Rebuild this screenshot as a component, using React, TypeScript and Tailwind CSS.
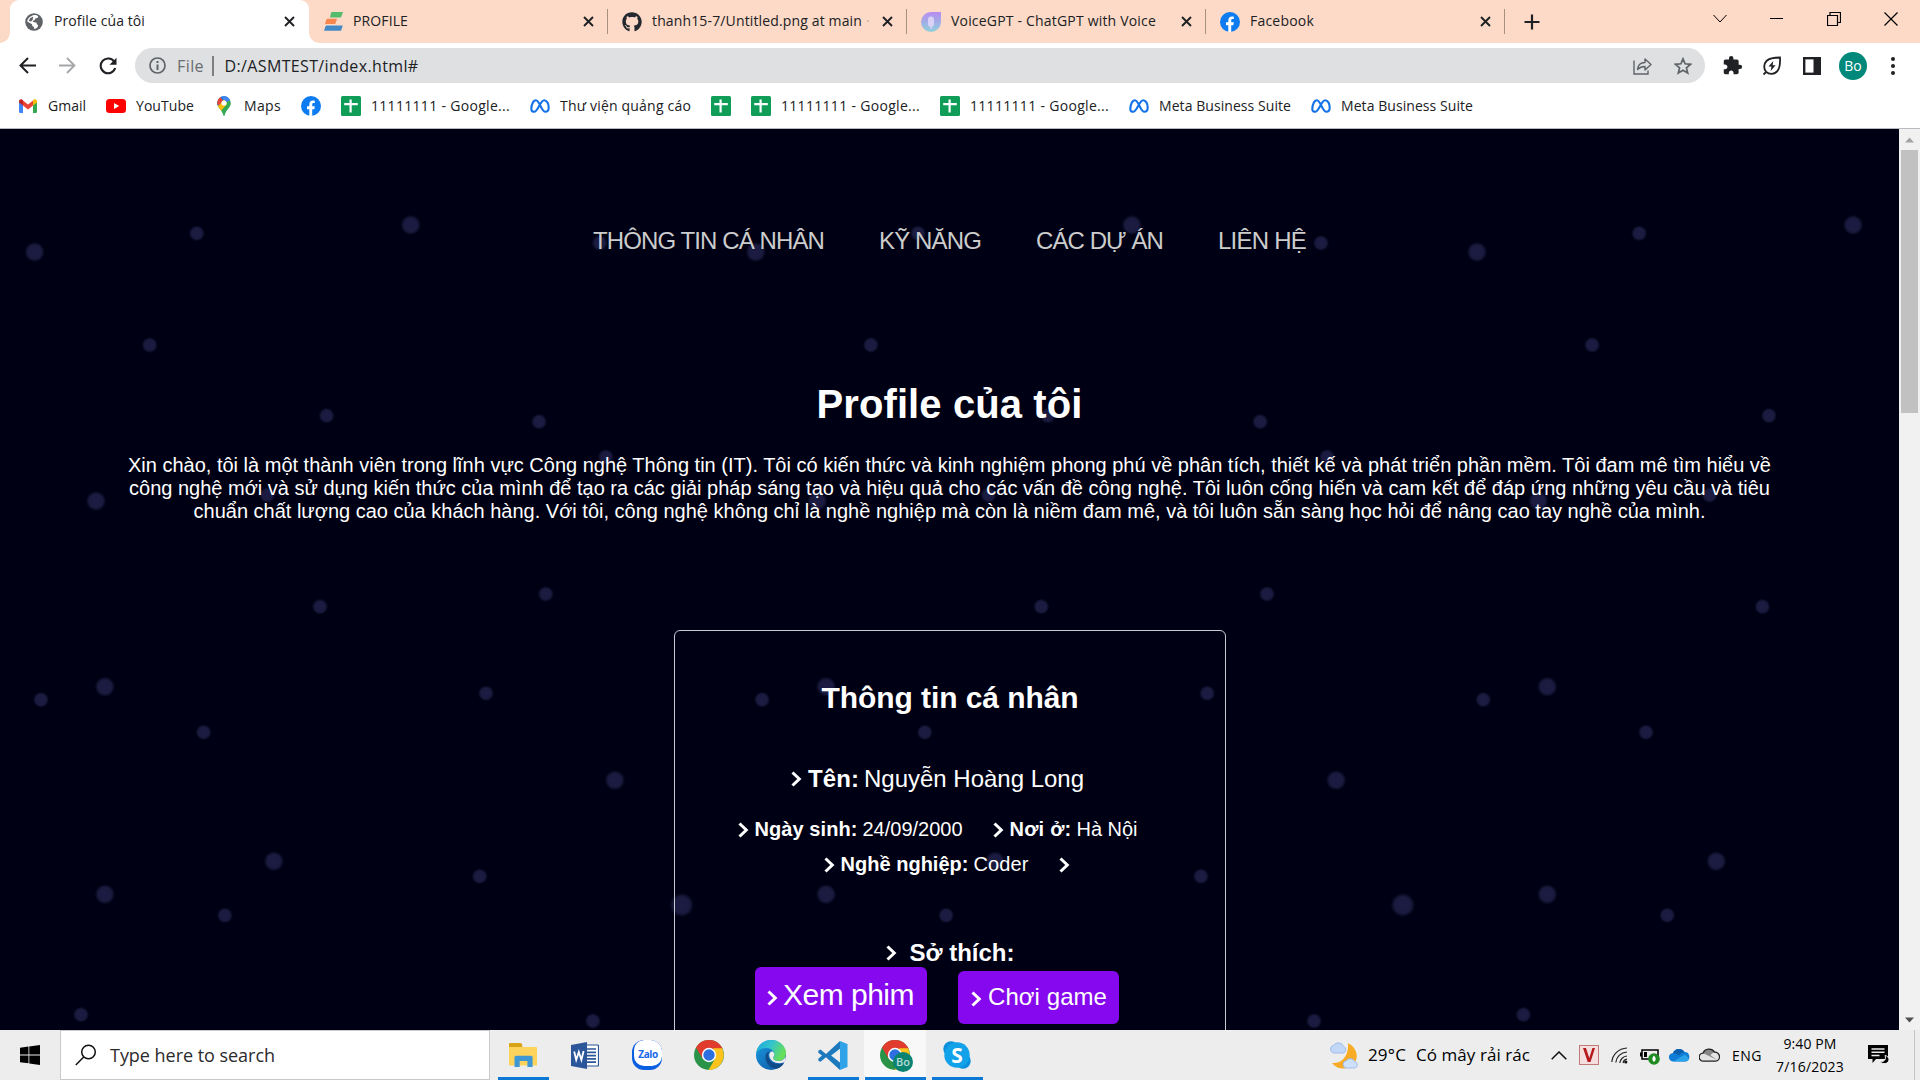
import { useLayoutEffect, useRef, type ReactNode } from "react";
import { FaGithub } from "react-icons/fa";
import { MdExtension } from "react-icons/md";

/* Text whose tracking is adjusted so that it spans exactly `w` pixels. */
function Fit({ w, children, className = "" }: { w: number; children: string; className?: string }) {
  const ref = useRef<HTMLSpanElement>(null);
  useLayoutEffect(() => {
    const el = ref.current;
    if (!el) return;
    el.style.letterSpacing = "0px";
    const natural = el.getBoundingClientRect().width;
    el.style.letterSpacing = `${(w - natural) / children.length}px`;
  }, [w, children]);
  return (
    <span ref={ref} className={`inline-block shrink-0 whitespace-pre ${className}`}>
      {children}
    </span>
  );
}

function Facebook({ size = 20 }: { size?: number }) {
  return (
    <svg width={size} height={size} viewBox="0 0 20 20" className="shrink-0">
      <circle cx="10" cy="10" r="10" fill="#0c7cf0" />
      <path d="M8.3 20v-6.7H6v-3h2.3V8.4c0-2.5 1.4-3.9 3.7-3.9.8 0 1.8.2 1.8.2v2.4h-1.2c-1.1 0-1.4.6-1.4 1.3v1.9h2.6l-.5 3h-2.1V20z" fill="#fff" />
    </svg>
  );
}

function Sheets() {
  return (
    <svg width="20" height="20" viewBox="0 0 20 20" className="shrink-0">
      <rect width="20" height="20" rx="1.5" fill="#0f9d58" />
      <path d="M9.6 3.5v13M3.2 8.2h13.6" stroke="#fff" strokeWidth="2.2" />
    </svg>
  );
}

function Meta() {
  return (
    <svg width="20" height="20" viewBox="0 0 20 20" className="shrink-0" fill="none">
      <path
        d="M1.3 13.3c0-4.800 2-9.100 4.700-9.100 3.500 0 5.400 11.600 9.400 11.600 2.100 0 3.300-1.500 3.300-4.300 0-4-1.900-7.300-4.500-7.300-4 0-6.100 11.600-10.100 11.600-1.700 0-2.800-1-2.800-2.500z"
        stroke="#1372e8"
        strokeWidth="2.1"
      />
    </svg>
  );
}

function Gmail() {
  return (
    <svg width="20" height="20" viewBox="0 0 20 20" className="shrink-0">
      <path d="M1 5v10.500c0 .8.500 1.500 1.300 1.500H5V8z" fill="#4285f4" />
      <path d="M19 5v10.500c0 .8-.5 1.500-1.300 1.500H15V8z" fill="#34a853" />
      <path d="M5 4.500l5 4 5-4v5l-5 4-5-4z" fill="#ea4335" />
      <path d="M1 5.200C1 3.300 3.200 2.700 4.300 3.700L5 4.500v5L1 6.500z" fill="#c5221f" />
      <path d="M19 5.200c0-1.900-2.200-2.500-3.300-1.500l-.7.8v5l4-3z" fill="#fbbc04" />
    </svg>
  );
}

function YouTube() {
  return (
    <svg width="20" height="20" viewBox="0 0 20 20" className="shrink-0">
      <rect y="3" width="20" height="14" rx="3.500" fill="#f00" />
      <path d="M8 7v6l5.200-3z" fill="#fff" />
    </svg>
  );
}

function Maps() {
  return (
    <svg width="20" height="20" viewBox="0 0 20 20" className="shrink-0">
      <defs>
        <clipPath id="pin">
          <path d="M10 .2a6.800 6.800 0 0 0-6.800 6.800c0 4.700 4.800 6.500 6 11.900.3 1.200 1.300 1.200 1.600 0 1.200-5.400 6-7.200 6-11.900A6.800 6.800 0 0 0 10 .2z" />
        </clipPath>
      </defs>
      <g clipPath="url(#pin)">
        <rect width="20" height="20" fill="#34a853" />
        <path d="M0 14L17 0H0z" fill="#1a73e8" />
        <path d="M3 11l8-9 2 6-7 8z" fill="#fbbc04" />
        <path d="M0 0h6l3 5-4 4-5-2z" fill="#ea4335" />
        <path d="M7 0h13v3l-8 3z" fill="#4285f4" />
      </g>
      <circle cx="10" cy="7" r="2.600" fill="#fff" />
    </svg>
  );
}

function Globe() {
  return (
    <svg width="18" height="18" viewBox="0 0 18 18" className="shrink-0">
      <circle cx="9" cy="9" r="8.800" fill="#5f6368" />
      <path d="M7.500 2.400c2-.9 4.300-.4 5.700.9-.2 1.700-1.200 2.300-3 2.200-.3 1.600-1 2.200-2.400 2.300-.1 1.200.5 1.500 1.700 1.400 1.700-.1 2.400.8 2.500 2.300 1.200.2 1.400 1.100.6 2.400-.8 1.100-1.800 1.800-3.300 2-.1-1.500-.5-2-1.300-2.400-1-.5-.9-1.300-.9-2.300L2.200 8.400C2.500 5.700 4.700 3.400 7.500 2.400z" fill="#fff" />
      <path d="M8.200 3.500L5 5.200 3.800 8l2.400.5 1.500-2z" fill="#5f6368" />
    </svg>
  );
}

function ProfileMark() {
  return (
    <svg width="19" height="19" viewBox="0 0 19 19" className="shrink-0">
      <path d="M8.200 0H19l-1.600 4.600c-.2.600-.6.900-1.200.9H6l1-4.500C7.200.3 7.600 0 8.200 0z" fill="#57bb6c" />
      <path d="M3.500 6.800H13l-1.300 4.300c-.2.500-.5.800-1.100.8H1L2.400 7.600c.2-.5.5-.8 1.100-.8z" fill="#f9864f" />
      <path d="M2.600 13.400h16.200l-1.500 4.500c-.2.600-.6.900-1.200.9H0l1.500-4.500c.2-.6.500-.9 1.100-.9z" fill="#4389c6" />
    </svg>
  );
}

function VoiceMark() {
  return (
    <svg width="20" height="20" viewBox="0 0 20 20" className="shrink-0">
      <defs>
        <linearGradient id="voice" x1="0" y1="0" x2="0" y2="1">
          <stop offset="0" stopColor="#b68cf0" />
          <stop offset="1" stopColor="#8fd0dc" />
        </linearGradient>
      </defs>
      <path d="M10 0h10v10A10 10 0 1 1 10 0z" fill="url(#voice)" />
      <rect x="7" y="4.500" width="6" height="10.500" rx="3" fill="#d9d2f6" />
      <path d="M10 15v2" stroke="#d9d2f6" strokeWidth="1.400" />
    </svg>
  );
}

function Cross() {
  return (
    <svg width="11" height="11" viewBox="0 0 11 11" className="shrink-0">
      <path d="M1 1l9 9M10 1l-9 9" stroke="#202124" strokeWidth="1.900" />
    </svg>
  );
}

function Tab({ icon, title, w, active, divider, fade }: { icon: ReactNode; title: string; w: number; active?: boolean; divider?: boolean; fade?: boolean }) {
  return (
    <div className={`relative flex h-[43px] w-[299px] shrink-0 items-center pl-[15px] ${active ? "rounded-t-[9px] bg-white" : ""}`}>
      {active && (
        <>
          <span className="absolute bottom-0 -left-[10px] h-[10px] w-[10px] bg-[radial-gradient(circle_at_0_0,transparent_9.5px,#fff_10px)]" />
          <span className="absolute -right-[10px] bottom-0 h-[10px] w-[10px] bg-[radial-gradient(circle_at_100%_0,transparent_9.5px,#fff_10px)]" />
        </>
      )}
      <span className="flex w-[18px] shrink-0 justify-center">{icon}</span>
      <span className="ml-[11px] flex flex-1 items-center pb-px text-[14px] leading-5 text-[#202124]">
        <Fit w={w}>{title}</Fit>
        {fade && <span className="ml-1 opacity-25">·</span>}
      </span>
      <span className="mr-[14px]">
        <Cross />
      </span>
      {divider && <span className="absolute top-[9px] right-0 h-[25px] w-px bg-[#a5917f]" />}
    </div>
  );
}

function TabStrip() {
  return (
    <header className="flex h-[43px] items-center bg-[#fcdac7] pl-[10px]">
      <Tab icon={<Globe />} title="Profile của tôi" w={91} active />
      <Tab icon={<ProfileMark />} title="PROFILE" w={55} divider />
      <Tab icon={<FaGithub className="h-5 w-5 shrink-0 text-[#24292f]" />} title="thanh15-7/Untitled.png at main" w={210} divider fade />
      <Tab icon={<VoiceMark />} title="VoiceGPT - ChatGPT with Voice" w={205} divider />
      <Tab icon={<Facebook />} title="Facebook" w={64} divider />
      <svg width="16" height="16" viewBox="0 0 16 16" className="ml-[19px]">
        <path d="M8 .5v15M.5 8h15" stroke="#202124" strokeWidth="2.200" />
      </svg>
      <div className="mr-[22px] mb-[6px] ml-auto flex items-center">
        <svg width="14" height="9" viewBox="0 0 14 9" fill="none" stroke="#000" className="mr-[43px]">
          <path d="M.5 1l6.500 7 6.500-7" />
        </svg>
        <span className="mr-[44px] h-px w-[13px] bg-black" />
        <svg width="14" height="14" viewBox="0 0 14 14" fill="none" stroke="#000" className="mr-[43px]">
          <path d="M.5 3.500h10v10H.5zM3 3V.5h10.500v10H11" strokeWidth="1.200" />
        </svg>
        <svg width="14" height="14" viewBox="0 0 14 14" stroke="#000">
          <path d="M.5.5l13 13M13.500.5l-13 13" strokeWidth="1.200" />
        </svg>
      </div>
    </header>
  );
}

function Toolbar() {
  return (
    <div className="flex h-[45px] items-center bg-white">
      <svg width="17" height="17" viewBox="0 0 17 17" fill="none" stroke="#202124" strokeWidth="2" className="ml-[19px]">
        <path d="M17 8.500H1.500M9 1L1.500 8.500 9 16" />
      </svg>
      <svg width="17" height="17" viewBox="0 0 17 17" fill="none" stroke="#a5a7aa" strokeWidth="1.800" className="ml-[23px]">
        <path d="M0 8.500h15.500M8 1l7.500 7.500L8 16" />
      </svg>
      <svg width="18" height="18" viewBox="0 0 18 18" fill="none" stroke="#202124" strokeWidth="2.100" className="ml-[23px]">
        <path d="M15.300 4.800A7.400 7.400 0 1 0 16.200 11" />
        <path d="M17.500.8v7h-7z" fill="#202124" stroke="none" />
      </svg>
      <div className="ml-[18px] flex h-[35px] w-[1570px] items-center rounded-full bg-[#dfe0e2]">
        <svg width="17" height="17" viewBox="0 0 17 17" fill="none" stroke="#5f6368" strokeWidth="1.700" className="ml-[14px]">
          <circle cx="8.500" cy="8.500" r="7.500" />
          <path d="M8.500 7.500V13M8.500 4v2" strokeWidth="2" />
        </svg>
        <span className="ml-[11px] flex text-[16px] text-[#6a6d70]">
          <Fit w={27}>File</Fit>
        </span>
        <span className="ml-[8px] h-5 w-[1.5px] bg-[#7c7e81]" />
        <span className="ml-[11px] flex text-[16px] text-[#202124]">
          <Fit w={194}>D:/ASMTEST/index.html#</Fit>
        </span>
        <svg width="19" height="18" viewBox="0 0 19 18" fill="none" stroke="#5f6368" strokeWidth="1.400" className="ml-auto">
          <path d="M1 3.500V17h14v-3.500" />
          <path d="M4.500 12.500C5 8 8 5.500 12 5.500V2l6 5.500-6 5.500V9.500c-3.500 0-5.500 1-7.500 3z" strokeLinejoin="round" />
        </svg>
        <svg width="18" height="18" viewBox="0 0 18 18" fill="none" stroke="#5f6368" strokeWidth="1.700" className="mr-[13px] ml-[22px]">
          <path d="M9 1.800l2.100 5 5.400.5-4.100 3.500 1.300 5.300L9 13.300l-4.700 2.800 1.300-5.300-4.100-3.500 5.400-.5z" />
        </svg>
      </div>
      <MdExtension className="ml-[17px] h-[21px] w-[21px] text-[#202124]" />
      <svg width="20" height="20" viewBox="0 0 20 20" fill="none" stroke="#202124" strokeWidth="1.800" className="ml-[19px]">
        <path d="M4.200 15.800C1.500 13 1.500 8 4.500 5 7.500 2 12 1.500 18 1.500c.3 6 0 11-3 14-3 3-8 3-10.800.3zm0 0L1.500 18.500" />
        <path d="M11.300 5L6.500 10.500h3L8.600 15l5-5.700h-3z" fill="#202124" stroke="none" />
      </svg>
      <svg width="18" height="18" viewBox="0 0 18 18" className="ml-[21px]">
        <rect x="1.200" y="1.200" width="15.600" height="15.600" fill="#fff" stroke="#202124" strokeWidth="2.400" />
        <path d="M10.500 0H18v18h-7.500z" fill="#202124" />
      </svg>
      <span className="ml-[18px] flex h-7 w-7 items-center justify-center rounded-full bg-[#00897b] text-[14px] text-white">Bo</span>
      <span className="ml-6 flex flex-col gap-[3px]">
        <i className="h-1 w-1 rounded-full bg-[#202124]" />
        <i className="h-1 w-1 rounded-full bg-[#202124]" />
        <i className="h-1 w-1 rounded-full bg-[#202124]" />
      </span>
    </div>
  );
}

function Bookmark({ icon, label, w }: { icon: ReactNode; label?: string; w?: number }) {
  return (
    <div className="flex shrink-0 items-center gap-[10px]">
      {icon}
      {label && <Fit w={w ?? 0}>{label}</Fit>}
    </div>
  );
}

function Bookmarks() {
  return (
    <div className="flex h-[41px] items-center gap-5 border-b border-[#b9bac0] bg-white pb-[5px] pl-[18px] text-[14px] text-[#202124]">
      <Bookmark icon={<Gmail />} label="Gmail" w={38} />
      <Bookmark icon={<YouTube />} label="YouTube" w={58} />
      <Bookmark icon={<Maps />} label="Maps" w={37} />
      <Bookmark icon={<Facebook />} />
      <Bookmark icon={<Sheets />} label="11111111 - Google..." w={139} />
      <Bookmark icon={<Meta />} label="Thư viện quảng cáo" w={131} />
      <Bookmark icon={<Sheets />} />
      <Bookmark icon={<Sheets />} label="11111111 - Google..." w={139} />
      <Bookmark icon={<Sheets />} label="11111111 - Google..." w={139} />
      <Bookmark icon={<Meta />} label="Meta Business Suite" w={132} />
      <Bookmark icon={<Meta />} label="Meta Business Suite" w={132} />
    </div>
  );
}

/* [x, y, radius] inside one 721.2px wide tile */
const dots: [number, number, number][] = [
  [34.6, 123, 8.8], [196.8, 104.3, 6.6], [410.7, 96, 8.8], [599.8, 114, 6.6],
  [149.7, 216, 6.6], [326.6, 286.7, 6.6], [539, 292.7, 6.6], [605.8, 328, 6.6],
  [96, 372, 8.8], [267.3, 366, 6.6], [320, 477.7, 6.6], [545.8, 465, 6.6],
  [104.9, 557.7, 8.8], [40.9, 570.7, 6.6], [486, 564.3, 6.6], [203.6, 603.3, 6.6],
  [614.9, 651.3, 8.8], [273.9, 732.3, 8.8], [479.7, 747.3, 6.6], [104.9, 765.3, 8.8],
  [224.9, 786.3, 6.6], [681.7, 776, 10.8], [81, 885.7, 6.6], [592.9, 892, 6.6],
];

function Starfield() {
  return (
    <svg className="pointer-events-none absolute inset-0 h-full w-full">
      <defs>
        <radialGradient id="dot">
          <stop offset="0" stopColor="#1c1c44" />
          <stop offset=".66" stopColor="#1b1b40" />
          <stop offset="1" stopColor="#1b1b40" stopOpacity="0" />
        </radialGradient>
        <pattern id="stars" width="721.2" height="901" patternUnits="userSpaceOnUse">
          {dots.map(([x, y, r]) => (
            <circle key={`${x}-${y}`} cx={x} cy={y} r={r + 1.4} fill="url(#dot)" />
          ))}
        </pattern>
      </defs>
      <rect width="100%" height="100%" fill="url(#stars)" />
    </svg>
  );
}

function Chevron({ className = "" }: { className?: string }) {
  return (
    <svg width="11" height="16" viewBox="0 0 11 16" fill="none" className={`shrink-0 ${className}`}>
      <path d="M1.500 1.500L8.300 8l-6.800 6.500" stroke="#fff" strokeWidth="3" />
    </svg>
  );
}

function Field({ label, value, lw, vw }: { label: string; value: string; lw: number; vw: number }) {
  return (
    <div className="flex items-center">
      <Chevron className="mr-[6px]" />
      <b>
        <Fit w={lw}>{label}</Fit>
      </b>
      <Fit w={vw} className="ml-[5px]">
        {value}
      </Fit>
    </div>
  );
}

function ProfilePage() {
  return (
    <main className="relative h-full w-[1899px] overflow-hidden bg-[#000014] font-['Liberation_Sans',Arial,sans-serif] text-white">
      <Starfield />
      <div className="relative flex flex-col items-center">
        <nav className="mt-[98px] flex gap-[55px] text-[24px] leading-7 text-[#ccc]">
          <Fit w={231}>THÔNG TIN CÁ NHÂN</Fit>
          <Fit w={102}>KỸ NĂNG</Fit>
          <Fit w={127}>CÁC DỰ ÁN</Fit>
          <Fit w={88}>LIÊN HỆ</Fit>
        </nav>
        <h1 className="mt-[126px] text-[40px] leading-[46px] font-bold">
          <Fit w={266}>Profile của tôi</Fit>
        </h1>
        <p className="mt-[27px] flex flex-col items-center text-[20px] leading-[23px]">
          <Fit w={1643}>Xin chào, tôi là một thành viên trong lĩnh vực Công nghệ Thông tin (IT). Tôi có kiến thức và kinh nghiệm phong phú về phân tích, thiết kế và phát triển phần mềm. Tôi đam mê tìm hiểu về</Fit>
          <Fit w={1641}>công nghệ mới và sử dụng kiến thức của mình để tạo ra các giải pháp sáng tạo và hiệu quả cho các vấn đề công nghệ. Tôi luôn cống hiến và cam kết để đáp ứng những yêu cầu và tiêu</Fit>
          <Fit w={1512}>chuẩn chất lượng cao của khách hàng. Với tôi, công nghệ không chỉ là nghề nghiệp mà còn là niềm đam mê, và tôi luôn sẵn sàng học hỏi để nâng cao tay nghề của mình.</Fit>
        </p>
        <section className="mt-[107px] ml-px flex h-[420px] w-[552px] flex-col items-center rounded-[6px] border border-[#c9c9d2] pt-[50px] text-[20px] leading-[23px]">
          <h2 className="text-[30px] leading-[34px] font-bold">
            <Fit w={257}>Thông tin cá nhân</Fit>
          </h2>
          <div className="mt-[50px] pr-[25px] text-[24px] leading-7">
            <Field label="Tên:" value="Nguyễn Hoàng Long" lw={51} vw={220} />
          </div>
          <div className="mt-[25px] flex gap-[30px] pr-[25px]">
            <Field label="Ngày sinh:" value="24/09/2000" lw={103} vw={100} />
            <Field label="Nơi ở:" value="Hà Nội" lw={62} vw={61} />
          </div>
          <div className="mt-3 flex items-center gap-[30px] pr-[7px]">
            <Field label="Nghề nghiệp:" value="Coder" lw={128} vw={55} />
            <Chevron />
          </div>
          <div className="mt-[63px] flex items-center text-[24px] leading-7 font-bold">
            <Chevron className="mr-[13px]" />
            <Fit w={105}>Sở thích:</Fit>
          </div>
          <div className="flex items-start gap-[31px] pr-[26px]">
            <div className="flex h-[58px] w-[172px] items-center rounded-[6px] bg-[#8608ee] pl-[12px] text-[30px] leading-[34px]">
              <Chevron className="mt-[4px] mr-[5px]" />
              <Fit w={131} className="-mt-[2px]">Xem phim</Fit>
            </div>
            <div className="mt-1 flex h-[53px] w-[161px] items-center rounded-[6px] bg-[#8608ee] pl-[13px] text-[24px] leading-7">
              <Chevron className="mt-[2px] mr-[6px]" />
              <Fit w={119} className="-mt-[1px]">Chơi game</Fit>
            </div>
          </div>
        </section>
      </div>
    </main>
  );
}

function Scrollbar() {
  return (
    <aside className="flex w-[21px] flex-col items-center bg-[#f1f1f1]">
      <span className="flex h-[21px] items-center justify-center">
        <svg width="9" height="6">
          <path d="M0 5.500L4.500.5 9 5.500z" fill="#a3a3a3" />
        </svg>
      </span>
      <span className="h-[263px] w-[17px] bg-[#c1c1c1]" />
      <span className="mt-auto flex h-[21px] items-center justify-center">
        <svg width="9" height="6">
          <path d="M0 .5l4.500 5 4.500-5z" fill="#505050" />
        </svg>
      </span>
    </aside>
  );
}

function ChromeLogo() {
  return (
    <svg width="30" height="30" viewBox="0 0 30 30">
      <circle cx="15" cy="15" r="15" fill="#2b9348" />
      <path d="M2 7.500A15 15 0 0 1 28 7.500L28.400 9H15L8.500 18.500z" fill="#e13b2e" />
      <path d="M28 7.900A15 15 0 0 1 14.500 30l6.700-11.500L19 8.300h9z" fill="#fcc31e" />
      <circle cx="15" cy="15" r="7.200" fill="#fff" />
      <circle cx="15" cy="15" r="5.700" fill="#2d6fe0" />
    </svg>
  );
}

function Explorer() {
  return (
    <svg width="28" height="24" viewBox="0 0 28 24">
      <path d="M0 1.200C0 .5.500 0 1.200 0h10c.8 0 1.500.6 1.800 1.300L13.500 5H0z" fill="#d9a317" />
      <path d="M0 4h27c.6 0 1 .4 1 1v17.500H0z" fill="#fdd35c" />
      <path d="M5.500 24V14.500c0-1 .8-1.800 1.800-1.800h14.500c1 0 1.800.8 1.800 1.800V24h-5.200v-6h-7.700v6z" fill="#3f97d4" />
    </svg>
  );
}

function Word() {
  return (
    <svg width="28" height="27" viewBox="0 0 28 27">
      <path d="M14 3h12.500c.6 0 1 .4 1 1v19c0 .6-.4 1-1 1H14z" fill="#fff" stroke="#2b579a" strokeWidth="1.200" />
      <path d="M16 7h9M16 10.300h9M16 13.600h9M16 16.900h9M16 20.200h9" stroke="#2b579a" strokeWidth="1.700" />
      <path d="M0 3l16-3v27L0 24z" fill="#2b579a" />
      <path d="M3.200 9.500l2 8.500 2.600-8 2.600 8 2.200-9" fill="none" stroke="#fff" strokeWidth="1.800" />
    </svg>
  );
}

function Zalo() {
  return (
    <div className="relative h-[30px] w-[30px] overflow-hidden rounded-[12px] bg-[#0a5fe0]">
      <div className="ml-[2px] flex h-[26px] w-[28px] items-center justify-center rounded-[10px] bg-white pt-[2px] text-[10px] font-bold tracking-[-0.4px] text-[#1668ea]">Zalo</div>
    </div>
  );
}

function Edge() {
  return (
    <svg width="30" height="30" viewBox="0 0 30 30">
      <defs>
        <linearGradient id="edgeTop" x1="0" y1="0" x2="1" y2=".4">
          <stop offset="0" stopColor="#1aa7e0" />
          <stop offset=".5" stopColor="#33c3cf" />
          <stop offset="1" stopColor="#66df58" />
        </linearGradient>
        <linearGradient id="edgeLow" x1="0" y1="0" x2="1" y2="1">
          <stop offset="0" stopColor="#1b9de2" />
          <stop offset="1" stopColor="#0b4f9f" />
        </linearGradient>
      </defs>
      <circle cx="15" cy="15" r="15" fill="url(#edgeLow)" />
      <path d="M.3 13C1.500 5 7.500 0 15 0c9 0 15 6.500 15 13 0 5-3.500 8-8 8-3 0-5-1.200-5-2.500 0-1 1.300-1.500 1.300-4 0-3.500-3.300-6.500-8-6.500C6 8 2.200 9.800.3 13z" fill="url(#edgeTop)" />
      <path d="M9.500 17c0 7 6 12 12 11.500 2.500-.5 5-2.700 6.500-5.500-7 3-15 0-15.800-7.500 0-2 .8-3.200 1.800-4-3 .2-4.500 2.500-4.500 5.500z" fill="#104a87" />
      <path d="M28.300 22.300c-6.500 2.700-14.500-.5-15-6.800-.2-3 2-4.700 3.500-3.800 2.600 1.600 1.200 4.300.4 5.800-.5 2 2 3.500 5 3.500 3.500 0 6-1.500 7.300-4.500.2 2-.2 4.200-1.200 5.800z" fill="#ededed" />
    </svg>
  );
}

function VSCode() {
  return (
    <svg width="30" height="29" viewBox="0 0 30 29">
      <path d="M22 0L8 13 2.500 8.500.3 9.700v2L4 14.500.3 17.700v2l2.200 1.100L8 16.300 22 29z" fill="#1c79bd" />
      <path d="M22 0l7.500 3v23L22 29V7.500L13 14.500l9 7z" fill="#2fa2e8" />
      <path d="M22 7.700v13.700l-8.800-6.900z" fill="#ededed" />
    </svg>
  );
}

function Skype() {
  return (
    <div className="relative flex h-[28px] w-[28px] items-center justify-center">
      <svg width="28" height="28" viewBox="0 0 28 28" className="absolute inset-0">
        <circle cx="8" cy="8" r="7.700" fill="#0a8fdc" />
        <circle cx="20" cy="20" r="7.700" fill="#0a8fdc" />
        <circle cx="14" cy="14" r="12.700" fill="#12a2ea" />
      </svg>
      <span className="relative text-[21px] leading-7 font-bold text-white">S</span>
    </div>
  );
}

function TaskbarApp({ children, running, active }: { children: ReactNode; running?: boolean; active?: boolean }) {
  return (
    <div className={`relative flex h-[50px] w-[62px] shrink-0 items-center justify-center ${active ? "bg-[#f8f8f8]" : ""}`}>
      {children}
      {running && <span className={`absolute bottom-0 h-[3px] bg-[#0a78d4] ${active ? "w-[61px]" : "w-[51px]"}`} />}
    </div>
  );
}

function Taskbar() {
  return (
    <footer className="flex h-[50px] items-center bg-[#ededed] text-black">
      <span className="flex w-[60px] shrink-0 justify-center">
        <svg width="20" height="20" viewBox="0 0 20 20">
          <path d="M0 2.800L8.500 1.600v7.900H0zM9.300 1.500L20 0v9.500H9.300zM0 10.400h8.500v7.900L0 17.200zM9.300 10.400H20V20L9.300 18.500z" />
        </svg>
      </span>
      <div className="flex h-[50px] w-[430px] shrink-0 items-center border border-[#c9c9c9] bg-white pl-[14px]">
        <svg width="22" height="22" viewBox="0 0 22 22" fill="none" stroke="#111" strokeWidth="1.500">
          <circle cx="13.500" cy="8" r="6.800" />
          <path d="M8.700 13L.8 21" />
        </svg>
        <span className="ml-[13px] flex text-[18px] text-[#2b2b2b]">
          <Fit w={165}>Type here to search</Fit>
        </span>
      </div>
      <div className="ml-[2px] flex shrink-0">
        <TaskbarApp running><Explorer /></TaskbarApp>
        <TaskbarApp><Word /></TaskbarApp>
        <TaskbarApp><Zalo /></TaskbarApp>
        <TaskbarApp><ChromeLogo /></TaskbarApp>
        <TaskbarApp><Edge /></TaskbarApp>
        <TaskbarApp running><VSCode /></TaskbarApp>
        <TaskbarApp running active>
          <div className="relative">
            <ChromeLogo />
            <span className="absolute -right-[3px] -bottom-[2px] flex h-5 w-5 items-center justify-center rounded-full bg-[#0b8373] text-[11px] font-semibold text-[#b5ddd5]">Bo</span>
          </div>
        </TaskbarApp>
        <TaskbarApp running><Skype /></TaskbarApp>
      </div>
      <svg width="30" height="29" viewBox="0 0 30 29" className="ml-[341px] shrink-0">
        <path d="M19 2c8 4 11 13 7 19-5 8-17 9-23 1 9 1 17-6 16-20z" fill="#f8ac26" />
        <path d="M4.500 12a4 4 0 0 1 .3-7.800 5.500 5.500 0 0 1 9.700 1.200A3.600 3.600 0 0 1 14.500 12z" fill="#c3d8f6" stroke="#92b2e6" strokeWidth=".8" />
        <path d="M17 27a3.700 3.700 0 0 1 .3-7.300 5 5 0 0 1 8.700 1A3.300 3.300 0 0 1 26 27z" fill="#cfe0fa" stroke="#92b2e6" strokeWidth=".8" />
      </svg>
      <span className="ml-[9px] flex text-[17px]">
        <Fit w={38}>29°C</Fit>
        <Fit w={114} className="ml-[10px]">Có mây rải rác</Fit>
      </span>
      <svg width="16" height="9" viewBox="0 0 16 9" fill="none" stroke="#111" strokeWidth="1.500" className="ml-[21px] shrink-0">
        <path d="M.7 8.300L8 1l7.300 7.300" />
      </svg>
      <span className="ml-[12px] flex h-5 w-5 shrink-0 items-center justify-center border border-[#c07a7a] bg-[#f5dede]">
        <svg width="12" height="14" viewBox="0 0 14 14" preserveAspectRatio="none">
          <path d="M0 0h3.500l3.800 10L11 0h3L8.800 14H5.500z" fill="#b5191e" />
        </svg>
      </span>
      <svg width="17" height="17" viewBox="0 0 17 17" fill="none" stroke="#222" strokeWidth="1.200" className="ml-[12px] shrink-0">
        <path d="M.8 15C1.500 7.500 7.500 1.500 16 1M4.800 15.500C5.300 10 9.500 5.500 16 5M8.800 16c.4-3.500 3.500-6.800 7.200-7M12 16c.4-1.800 2-3.500 4-3.800" />
        <circle cx="14.800" cy="15" r="1.600" fill="#111" stroke="none" />
      </svg>
      <svg width="20" height="19" viewBox="0 0 20 19" className="ml-[12px] shrink-0">
        <path d="M2 4h16v9H2z" fill="#ededed" stroke="#000" strokeWidth="1.500" />
        <path d="M0 6.500h2v4H0zM4 6h3v5H4z" />
        <circle cx="14" cy="13" r="5.800" fill="#1d8a22" />
        <path d="M14 9.500c2.300 2.500 2.300 4.500 0 6.500-2.300-2-2.300-4 0-6.500z" fill="#fff" />
      </svg>
      <svg width="21" height="14" viewBox="0 0 21 14" className="ml-[9px] shrink-0">
        <path d="M4.500 13.500a4.300 4.300 0 0 1-.5-8.600A6.500 6.500 0 0 1 15.500 4a4.800 4.800 0 0 1 1 9.500z" fill="#0f7cd6" />
        <path d="M4 4.900A6.500 6.500 0 0 1 15.500 4c-3 .2-4 2-5.500 3.500C8 6 6 5 4 4.900z" fill="#0a5fb0" />
        <path d="M4.500 13.500L16 6.500l3.800 3.700c.2 2-1.600 3.300-3.300 3.300z" fill="#2ba3ea" />
      </svg>
      <svg width="21" height="14" viewBox="0 0 21 14" className="ml-[9px] shrink-0">
        <path d="M4.500 13.200a4 4 0 0 1-.5-8A6.500 6.500 0 0 1 15.500 4.200a4.500 4.500 0 0 1 1 9z" fill="#e3e3e3" />
        <path d="M4 5.200A6.500 6.500 0 0 1 15.500 4.200c-2 .5-3 1.500-4 3L18 12 9 7.500z" fill="#888" />
        <path d="M4.500 13.200a4 4 0 0 1-.5-8A6.500 6.500 0 0 1 15.500 4.200a4.500 4.500 0 0 1 1 9z" fill="none" stroke="#222" strokeWidth="1.300" />
      </svg>
      <span className="ml-[12px] flex text-[14px]">
        <Fit w={30}>ENG</Fit>
      </span>
      <div className="ml-[13px] flex w-[70px] shrink-0 flex-col items-center text-[14px] leading-[23px]">
        <Fit w={53}>9:40 PM</Fit>
        <Fit w={68}>7/16/2023</Fit>
      </div>
      <svg width="22" height="22" viewBox="0 0 22 22" className="ml-[23px] shrink-0">
        <path d="M0 1h20v14H8l-3.500 4v-4H0z" />
        <path d="M3.500 5h13M3.500 8.300h13M3.500 11.600h8" stroke="#ededed" strokeWidth="1.500" />
        <path d="M17 11.500c1.500 4-1 6.700-5 6 2.500 3.500 9 2.500 9-2 0-2-1.800-3.700-4-4z" stroke="#ededed" />
      </svg>
      <span className="ml-auto h-[50px] w-px bg-[#c4c4c4]" />
      <span className="w-[5px]" />
    </footer>
  );
}

export default function App() {
  return (
    <div className="flex h-[1080px] w-[1920px] flex-col overflow-hidden bg-white font-['Open_Sans','Noto_Sans',sans-serif]">
      <TabStrip />
      <Toolbar />
      <Bookmarks />
      <div className="flex h-[901px]">
        <ProfilePage />
        <Scrollbar />
      </div>
      <Taskbar />
    </div>
  );
}
